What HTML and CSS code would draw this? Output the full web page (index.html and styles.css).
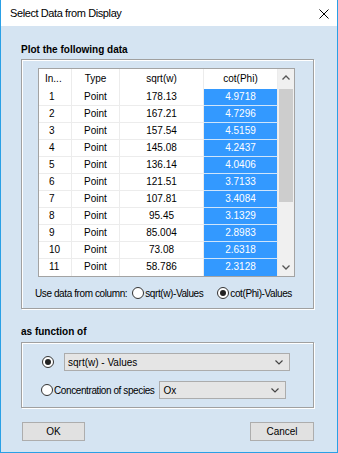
FILE: index.html
```html
<!DOCTYPE html>
<html lang="en">
<head>
  <meta charset="UTF-8">
  <meta name="viewport" content="width=device-width, initial-scale=1.0">
  <title>Select Data from Display</title>
  <link rel="stylesheet" href="styles.css">
</head>
<body>
  <div class="window">
    <div class="titlebar">
      <span class="title">Select Data from Display</span>
      <svg class="close" width="10" height="10" viewBox="0 0 10 10">
        <path d="M0.5 0.5 L9.5 9.5 M9.5 0.5 L0.5 9.5" stroke="#000" stroke-width="1"/>
      </svg>
    </div>

    <div class="dialog">
      <div class="group-title first">Plot the following data</div>
      <div class="groupbox plot">
        <div class="grid">
          <div class="table" id="table">
            <div class="row head">
              <div class="cell idx">In...</div>
              <div class="cell">Type</div>
              <div class="cell">sqrt(w)</div>
              <div class="cell">cot(Phi)</div>
            </div>
          </div>
          <div class="scrollbar">
            <div class="arrow">
              <svg width="8" height="5" viewBox="0 0 8 5"><path d="M0.5 4.5 L4 1 L7.5 4.5" fill="none" stroke="#555" stroke-width="1.3"/></svg>
            </div>
            <div class="track">
              <div class="thumb"></div>
            </div>
            <div class="arrow">
              <svg width="8" height="5" viewBox="0 0 8 5"><path d="M0.5 0.5 L4 4 L7.5 0.5" fill="none" stroke="#555" stroke-width="1.3"/></svg>
            </div>
          </div>
        </div>

        <div class="source">
          <span class="label">Use data from column:</span>
          <span class="radio"></span>
          <span>sqrt(w)-Values</span>
          <span class="radio checked second"></span>
          <span>cot(Phi)-Values</span>
        </div>
      </div>

      <div class="group-title">as function of</div>
      <div class="groupbox func">
        <div class="option">
          <span class="radio checked"></span>
          <div class="combo wide">
            <span>sqrt(w) - Values</span>
            <svg width="8" height="5" viewBox="0 0 8 5"><path d="M0.5 0.5 L4 4 L7.5 0.5" fill="none" stroke="#444" stroke-width="1.2"/></svg>
          </div>
        </div>
        <div class="option second">
          <span class="radio"></span>
          <span class="species">Concentration of species</span>
          <div class="combo narrow">
            <span>Ox</span>
            <svg width="8" height="5" viewBox="0 0 8 5"><path d="M0.5 0.5 L4 4 L7.5 0.5" fill="none" stroke="#444" stroke-width="1.2"/></svg>
          </div>
        </div>
      </div>

      <div class="buttons">
        <button class="btn ok">OK</button>
        <button class="btn cancel">Cancel</button>
      </div>
    </div>
  </div>

  <script>
    const data = [
      [1, 'Point', '178.13', '4.9718'],
      [2, 'Point', '167.21', '4.7296'],
      [3, 'Point', '157.54', '4.5159'],
      [4, 'Point', '145.08', '4.2437'],
      [5, 'Point', '136.14', '4.0406'],
      [6, 'Point', '121.51', '3.7133'],
      [7, 'Point', '107.81', '3.4084'],
      [8, 'Point', '95.45', '3.1329'],
      [9, 'Point', '85.004', '2.8983'],
      [10, 'Point', '73.08', '2.6318'],
      [11, 'Point', '58.786', '2.3128']
    ];

    const table = document.getElementById('table');
    data.forEach(function(r) {
      const row = document.createElement('div');
      row.className = 'row';
      row.innerHTML =
        '<div class="cell idx">' + r[0] + '</div>' +
        '<div class="cell">' + r[1] + '</div>' +
        '<div class="cell">' + r[2] + '</div>' +
        '<div class="cell sel">' + r[3] + '</div>';
      table.appendChild(row);
    });
  </script>
</body>
</html>
```

FILE: styles.css
```css
* { margin: 0; padding: 0; box-sizing: border-box; }
body {
  font-family: 'Liberation Sans', Arial, sans-serif;
  font-size: 10px;
  color: #000;
  background: #fff;
}
.window {
  width: 338px;
  height: 453px;
  border: 1px solid #2aa0e6;
  border-top: none;
  background: #d5e4f2;
  display: flex;
  flex-direction: column;
}
.titlebar {
  height: 26px;
  background: #fff;
  display: flex;
  align-items: center;
  justify-content: space-between;
  padding: 0 8px 0 9px;
}
.title {
  font-size: 11px;
  letter-spacing: -0.4px;
}
.close {
  display: block;
  margin-top: 1px;
}
.dialog {
  padding-left: 20px;
}
.group-title {
  font-weight: bold;
  height: 14px;
  line-height: 14px;
  margin-top: 16px;
}
.group-title.first {
  margin-top: 17px;
}
.groupbox {
  width: 293px;
  border: 1px solid #a0a0a0;
  box-shadow: inset 1px 1px 0 #fff, 1px 1px 0 #fff;
}
.plot {
  height: 250px;
  margin-top: 2px;
  padding: 8px 0 0 16px;
}
.grid {
  display: flex;
  width: 257px;
  height: 209px;
  border: 1px solid #a3a3a3;
  background: #fff;
}
.table {
  width: 239px;
}
.row {
  display: grid;
  grid-template-columns: 33px 48px 84px 74px;
  height: 17px;
}
.row.head {
  height: 20px;
}
.cell {
  border-right: 1px solid #ececec;
  border-bottom: 1px solid #ececec;
  text-align: center;
  line-height: 16px;
  white-space: nowrap;
}
.head .cell {
  line-height: 19px;
  border-bottom: none;
}
.row:last-child .cell {
  border-bottom: none;
}
.cell.idx {
  text-align: left;
  padding-left: 10px;
}
.head .cell.idx {
  padding-left: 6px;
}
.cell.sel {
  background: #3399ff;
  color: #fff;
  border-bottom-color: #cfe5fb;
}
.scrollbar {
  width: 16px;
  background: #f0f0f0;
  display: flex;
  flex-direction: column;
}
.arrow {
  height: 17px;
  display: flex;
  align-items: center;
  justify-content: center;
}
.track {
  flex: 1;
  padding: 3px 1px 0;
}
.thumb {
  height: 113px;
  background: #cdcdcd;
}
.source {
  display: flex;
  align-items: center;
  height: 16px;
  margin-top: 8px;
  margin-left: -3px;
  letter-spacing: -0.4px;
}
.source .label {
  margin-right: 5px;
}
.radio {
  width: 12px;
  height: 12px;
  border: 1px solid #333;
  border-radius: 50%;
  background: #fff;
  display: flex;
  align-items: center;
  justify-content: center;
  margin-right: 1px;
}
.radio.checked::after {
  content: '';
  width: 6px;
  height: 6px;
  border-radius: 50%;
  background: #222;
}
.radio.second {
  margin-left: 14px;
}
.func {
  height: 66px;
  margin-top: 3px;
  padding: 10px 0 0 20px;
}
.option {
  display: flex;
  align-items: center;
  height: 18px;
}
.option.second {
  margin-top: 10px;
  margin-left: -1px;
}
.option > .radio {
  margin-right: 10px;
}
.option.second > .radio {
  margin-right: 1px;
}
.species {
  margin-right: 5px;
  letter-spacing: -0.4px;
}
.combo {
  height: 18px;
  background: #e5e5e5;
  border: 1px solid #acacac;
  display: flex;
  align-items: center;
  justify-content: space-between;
  padding: 0 6px 0 3px;
}
.combo.wide {
  width: 226px;
}
.combo.narrow {
  width: 127px;
}
.buttons {
  display: flex;
  justify-content: space-between;
  width: 293px;
  margin-top: 14px;
  padding-left: 1px;
}
.btn {
  height: 19px;
  background: #e1e1e1;
  border: 1px solid #adadad;
  font-family: 'Liberation Sans', Arial, sans-serif;
  font-size: 10px;
  color: #000;
}
.btn.ok {
  width: 63px;
}
.btn.cancel {
  width: 64px;
}
```
